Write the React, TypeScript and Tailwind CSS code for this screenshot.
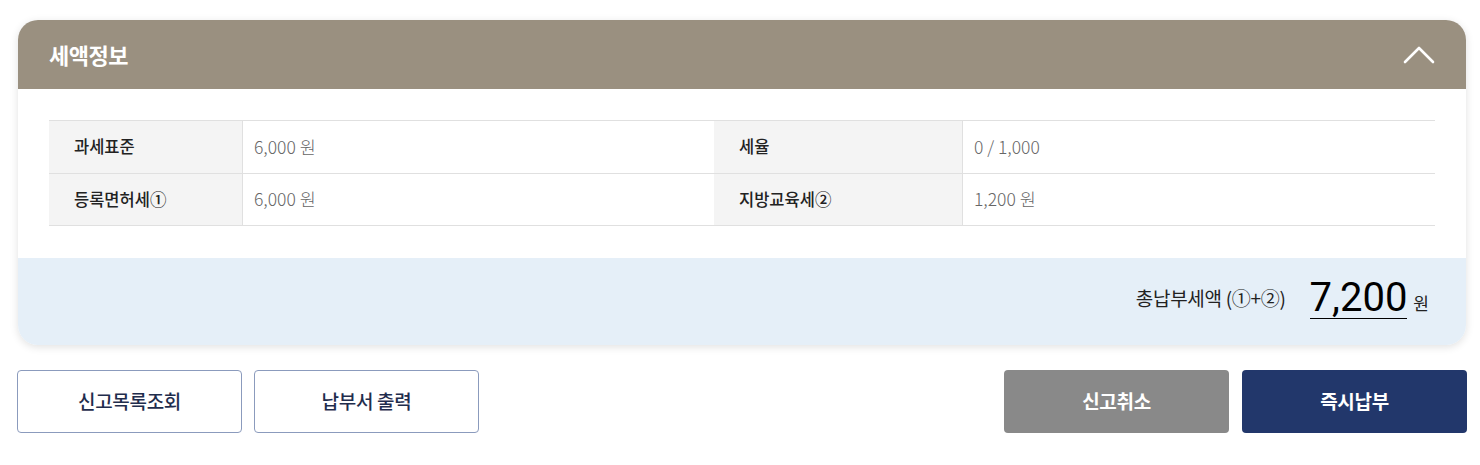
import { FC, Fragment } from "react";

const font = { fontFamily: '"Noto Sans CJK KR", "Noto Sans", sans-serif' };

interface Row {
  label: string;
  value: string;
}

const rows: [Row, Row][] = [
  [
    { label: "과세표준", value: "6,000 원" },
    { label: "세율", value: "0 / 1,000" },
  ],
  [
    { label: "등록면허세①", value: "6,000 원" },
    { label: "지방교육세②", value: "1,200 원" },
  ],
];

const App: FC = () => {
  return (
    <div
      className="w-[1480px] h-[465px] bg-white pt-[20px] pl-[18px] pr-[14px]"
      style={font}
    >
      <div className="rounded-[20px] bg-white shadow-[0_2px_8px_rgba(0,0,0,0.12)] overflow-hidden">
        <div className="h-[69px] bg-[#9a9080] flex items-center justify-between pl-[31px] pr-[31px]">
          <h2 className="text-white text-[22px] font-bold tracking-[-0.5px]">세액정보</h2>
          <svg width="32" height="18" viewBox="0 0 32 18" fill="none">
            <path d="M2 16 L16 2 L30 16" stroke="#fff" strokeWidth="2.6" strokeLinecap="round" strokeLinejoin="round" />
          </svg>
        </div>

        <div className="px-[31px] pt-[31px] pb-[32px]">
          <div className="border-t border-[#e0e0e0]">
            {rows.map((row, i) => (
              <div
                key={i}
                className="grid grid-cols-[194px_471px_249px_1fr] h-[52.5px] border-b border-[#e0e0e0]"
              >
                {row.map((cell) => (
                  <Fragment key={cell.label}>
                    <div className="bg-[#f4f4f4] border-r border-[#e0e0e0] flex items-center pl-[25px] text-[#222] text-[16.5px] font-medium">
                      {cell.label}
                    </div>
                    <div className="flex items-center pl-[11px] text-[#666] text-[17.5px] font-light">
                      {cell.value}
                    </div>
                  </Fragment>
                ))}
              </div>
            ))}
          </div>
        </div>

        <div className="h-[87px] bg-[#e5eff8] flex items-center justify-end pr-[37px] pb-[7px]">
          <span className="text-[19px] text-[#222] mr-[24px] tracking-[-0.3px]">총납부세액 (①+②)</span>
          <span className="text-[40px] leading-none text-black border-b-[1.5px] border-black pt-[1px] font-[Roboto]">
            7,200
          </span>
          <span className="text-[17px] text-[#222] ml-[6px] mt-[10px]">원</span>
        </div>
      </div>

      <div className="flex justify-between mt-[25px] -ml-[1px] -mr-[1px]">
        <div className="flex gap-[12px]">
          <button className="w-[225px] h-[63px] rounded-[4px] border border-[#8b9bbd] bg-white text-[#1f2d4d] text-[19px] font-medium tracking-[-0.3px]">
            신고목록조회
          </button>
          <button className="w-[225px] h-[63px] rounded-[4px] border border-[#8b9bbd] bg-white text-[#1f2d4d] text-[19px] font-medium tracking-[-0.3px]">
            납부서 출력
          </button>
        </div>
        <div className="flex gap-[13px]">
          <button className="w-[225px] h-[63px] rounded-[4px] bg-[#898989] text-white text-[19px] font-bold tracking-[-0.3px]">
            신고취소
          </button>
          <button className="w-[225px] h-[63px] rounded-[4px] bg-[#22376b] text-white text-[19px] font-bold tracking-[-0.3px]">
            즉시납부
          </button>
        </div>
      </div>
    </div>
  );
};

export default App;
